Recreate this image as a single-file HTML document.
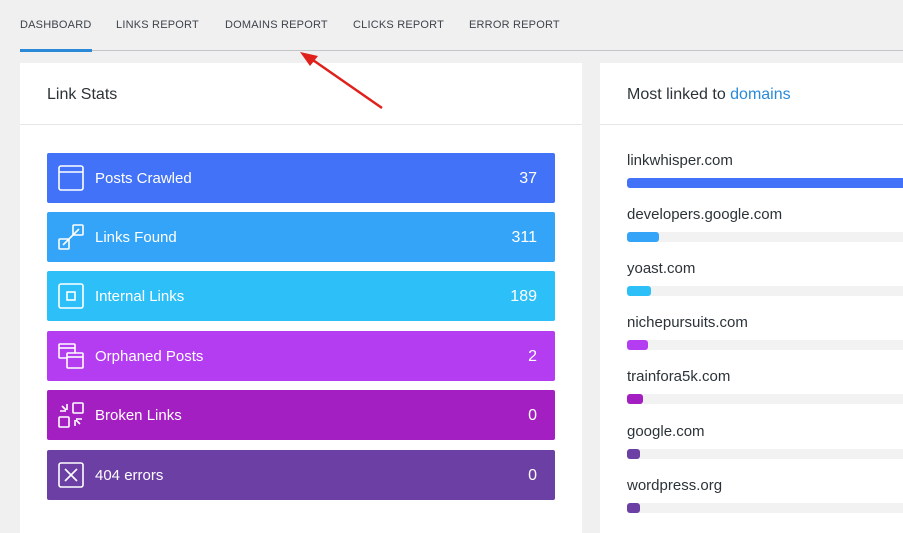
<!DOCTYPE html><html><head><style>
body{margin:0;width:903px;height:524px;overflow:hidden;background:#f0f0f1;font-family:"Liberation Sans",sans-serif;position:relative}
.nav{position:absolute;top:19px;font-size:11px;color:#3c434a;letter-spacing:.2px;white-space:nowrap}
.line{position:absolute;left:20px;top:50px;width:883px;height:1px;background:#c3c4c7}
.act{position:absolute;left:20px;top:49px;width:72px;height:3px;background:#2a8ad8}
.panel{position:absolute;background:#fff;top:63px;height:470px}
.ph{position:absolute;top:0;left:0;right:0;height:62px;border-bottom:1px solid #e6e6e6;font-size:16px;color:#2c3338;padding:23px 0 0 27px;box-sizing:border-box}
.row{position:absolute;left:27px;width:508px;height:50px;border-radius:2px;color:#fff;font-size:15px}
.row svg{position:absolute;left:11px;top:12px}
.row .t{position:absolute;left:48px;top:17px}
.row .n{position:absolute;right:18px;top:17px;font-size:16px}
.d{position:absolute;left:27px;font-size:15px;color:#2c3338}
.bar{position:absolute;left:27px;width:290px;height:10px;background:#f2f2f2;border-radius:3px 0 0 3px}
.bar i{display:block;height:10px;border-radius:3px}
</style></head><body>
<div class="nav" style="left:20px">DASHBOARD</div>
<div class="nav" style="left:116px">LINKS REPORT</div>
<div class="nav" style="left:225px">DOMAINS REPORT</div>
<div class="nav" style="left:353px">CLICKS REPORT</div>
<div class="nav" style="left:469px">ERROR REPORT</div>
<div class="line"></div><div class="act"></div>
<div class="panel" style="left:20px;width:562px">
<div class="ph">Link Stats</div>
<div class="row" style="top:90px;background:#4272f7"><svg width="26" height="26" fill="none" stroke="#fff" stroke-width="1.6"><rect x="1" y="1" width="24" height="24" rx="2"/><line x1="1" y1="7" x2="25" y2="7"/></svg><span class="t">Posts Crawled</span><span class="n">37</span></div>
<div class="row" style="top:149px;background:#33a4f8"><svg width="26" height="26" fill="none" stroke="#fff" stroke-width="1.6"><rect x="1" y="15" width="10" height="10" rx="1"/><rect x="15" y="1" width="10" height="10" rx="1"/><line x1="5" y1="21" x2="21" y2="5"/></svg><span class="t">Links Found</span><span class="n">311</span></div>
<div class="row" style="top:208px;background:#2dbff8"><svg width="26" height="26" fill="none" stroke="#fff" stroke-width="1.6"><rect x="1" y="1" width="24" height="24" rx="2"/><rect x="9" y="9" width="8" height="8"/></svg><span class="t">Internal Links</span><span class="n">189</span></div>
<div class="row" style="top:268px;background:#b43df2"><svg width="26" height="26" fill="none" stroke="#fff" stroke-width="1.6"><rect x="1" y="1" width="16" height="14" rx="1"/><line x1="1" y1="5" x2="17" y2="5"/><rect x="9" y="10" width="16" height="15" rx="1" fill="#b43df2"/><line x1="9" y1="14" x2="25" y2="14"/></svg><span class="t">Orphaned Posts</span><span class="n">2</span></div>
<div class="row" style="top:327px;background:#a41fc1"><svg width="26" height="26" fill="none" stroke="#fff" stroke-width="1.6"><rect x="1" y="15" width="10" height="10" rx="1"/><rect x="15" y="1" width="10" height="10" rx="1"/><path d="M9 2v6M2 9h6M4 4l4 4M17 24v-6M24 17h-6M22 22l-4-4"/></svg><span class="t">Broken Links</span><span class="n">0</span></div>
<div class="row" style="top:387px;background:#6c3fa4"><svg width="26" height="26" fill="none" stroke="#fff" stroke-width="1.6"><rect x="1" y="1" width="24" height="24" rx="2"/><path d="M7 7l12 12M19 7L7 19"/></svg><span class="t">404 errors</span><span class="n">0</span></div>
</div>
<div class="panel" style="left:600px;width:303px">
<div class="ph">Most linked to <span style="color:#2a8ad8">domains</span></div>
<div class="d" style="top:89px">linkwhisper.com</div><div class="bar" style="top:115px"><i style="width:290px;background:#4272f7"></i></div>
<div class="d" style="top:143px">developers.google.com</div><div class="bar" style="top:169px"><i style="width:32px;background:#33a4f8"></i></div>
<div class="d" style="top:197px">yoast.com</div><div class="bar" style="top:223px"><i style="width:24px;background:#2dbff8"></i></div>
<div class="d" style="top:251px">nichepursuits.com</div><div class="bar" style="top:277px"><i style="width:21px;background:#b43df2"></i></div>
<div class="d" style="top:305px">trainfora5k.com</div><div class="bar" style="top:331px"><i style="width:16px;background:#a41fc1"></i></div>
<div class="d" style="top:360px">google.com</div><div class="bar" style="top:386px"><i style="width:13px;background:#6c3fa4"></i></div>
<div class="d" style="top:414px">wordpress.org</div><div class="bar" style="top:440px"><i style="width:13px;background:#6c3fa4"></i></div>
</div>
<svg style="position:absolute;left:0;top:0" width="903" height="524"><line x1="382" y1="108" x2="310" y2="58" stroke="#e0201b" stroke-width="2.5"/><polygon points="300,52 318,56 310,66" fill="#e0201b"/></svg>
</body></html>
